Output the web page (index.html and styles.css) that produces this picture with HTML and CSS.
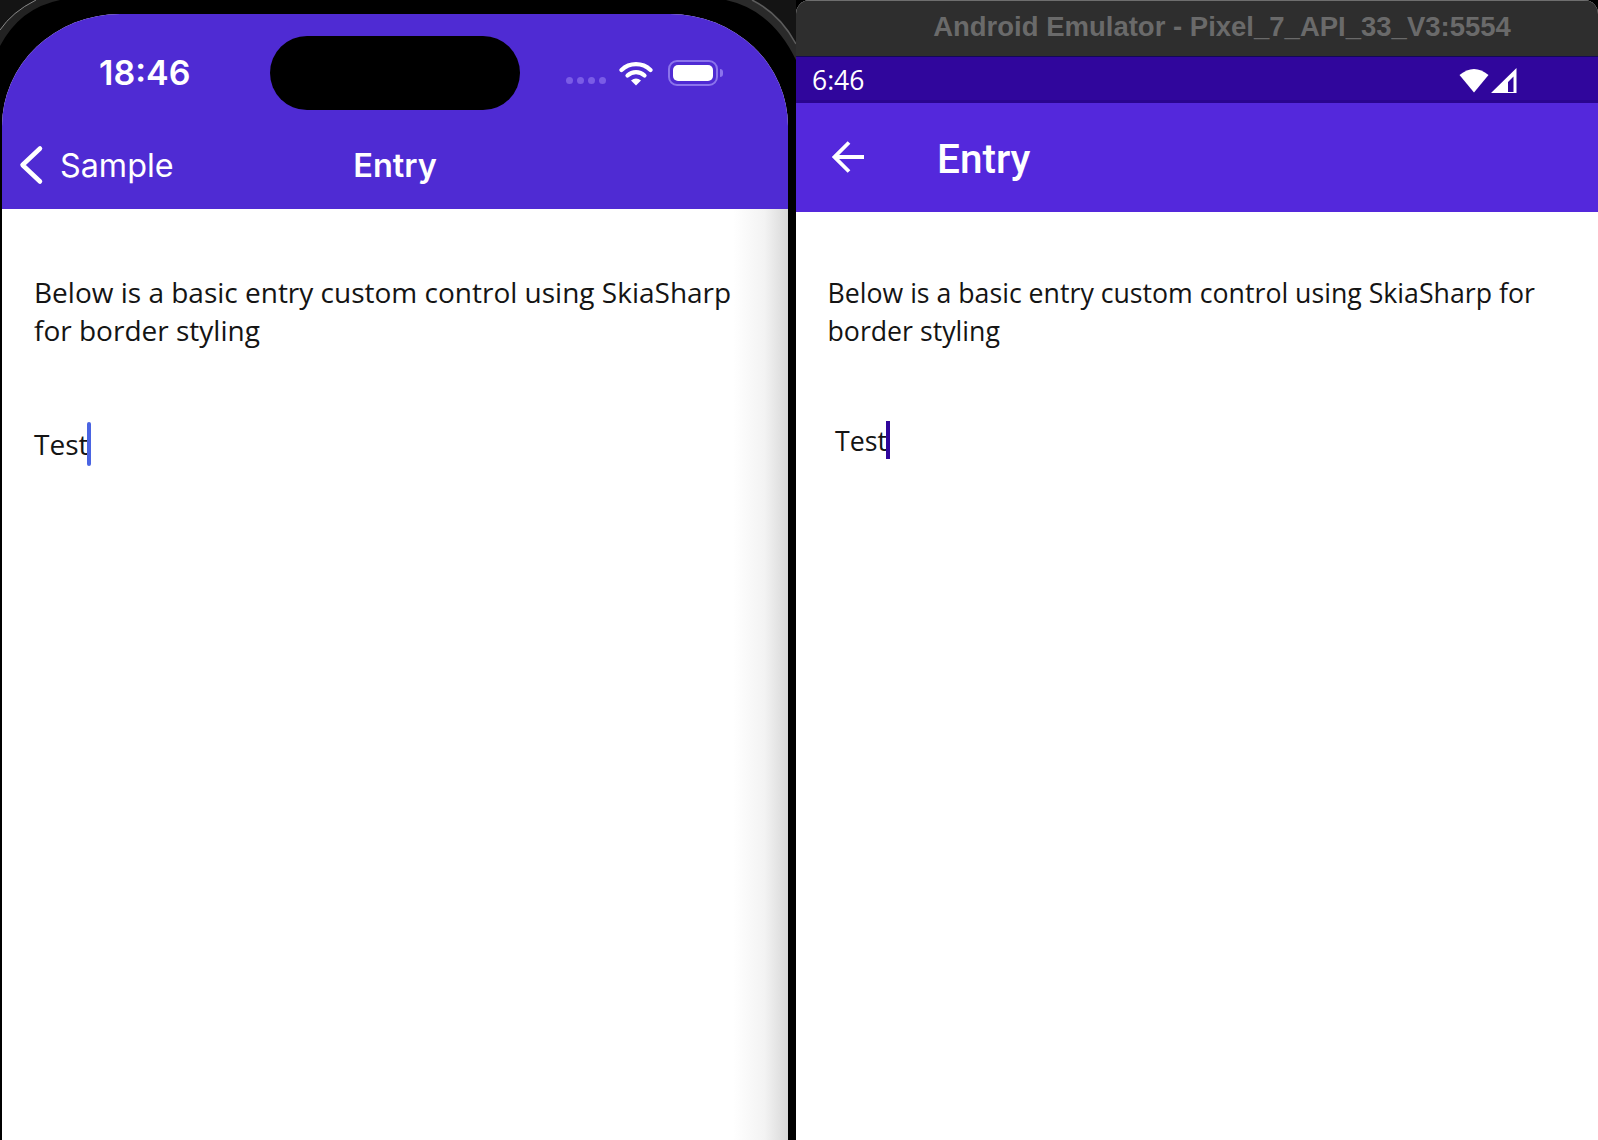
FILE: index.html
```html
<!DOCTYPE html>
<html lang="en">
<head>
  <meta charset="UTF-8">
  <meta name="viewport" content="width=device-width, initial-scale=1.0">
  <title>Entry samples</title>
  <link rel="stylesheet" href="styles.css">
</head>
<body>
  <div class="stage">

    <!-- iOS simulator -->
    <div class="phone">
      <svg class="bezel" width="796" height="60" viewBox="0 0 796 60">
        <path d="M0 0H36Q12 12 0 30Z" fill="#141414"/>
        <path d="M0 30Q12 12 36 0H60Q20 8 0 46Z" fill="#222"/>
        <path d="M0 30Q12 12 36 0" fill="none" stroke="#8a8a8a" stroke-width="1"/>
        <path d="M796 0H752Q780 14 796 44Z" fill="#141414"/>
        <path d="M796 44Q780 14 752 0H726Q772 10 796 60Z" fill="#2a2a2a"/>
        <path d="M796 44Q780 14 752 0" fill="none" stroke="#5c5c5c" stroke-width="1.5"/>
      </svg>
      <div class="screen">
        <header class="ios-header">
          <div class="ios-status">
            <span class="ios-time">18:46</span>
            <div class="ios-icons">
              <div class="dots"><i></i><i></i><i></i><i></i></div>
              <svg class="ios-wifi" width="34" height="26" viewBox="0 0 34 26">
                <path d="M2.500 10A21 21 0 0 1 31.500 10" fill="none" stroke="#fff" stroke-width="4.200" stroke-linecap="round"/>
                <path d="M8.500 15.500A12.500 12.500 0 0 1 25.500 15.500" fill="none" stroke="#fff" stroke-width="4.200" stroke-linecap="round"/>
                <path d="M12 20.500Q17 16.500 22 20.500L17 25.500Z" fill="#fff"/>
              </svg>
              <div class="battery"><div class="battery-fill"></div></div>
              <div class="battery-nub"></div>
            </div>
          </div>
          <div class="ios-nav">
            <svg class="ios-back" width="26" height="40" viewBox="0 0 26 40">
              <path d="M22 3.500L4.500 20L22 36.500" fill="none" stroke="#fff" stroke-width="4.500" stroke-linecap="round" stroke-linejoin="round"/>
            </svg>
            <span class="ios-back-label">Sample</span>
            <span class="ios-title">Entry</span>
          </div>
        </header>
        <div class="ios-content">
          <p class="intro">Below is a basic entry custom control using SkiaSharp for border styling</p>
          <div class="entry"><span>Test</span><span class="caret"></span></div>
        </div>
      </div>
      <div class="island"></div>
    </div>

    <!-- Android emulator -->
    <div class="emulator">
      <div class="titlebar">Android Emulator - Pixel_7_API_33_V3:5554</div>
      <div class="android-status">
        <span>6:46</span>
        <div class="android-icons">
          <svg width="30" height="26" viewBox="0 0 30 26">
            <path d="M0.500 8Q15 -4 29.500 8L15 25.500Z" fill="#fff"/>
          </svg>
          <svg width="26" height="25" viewBox="0 0 26 25">
            <path d="M0 25L25.500 0V25ZM17 24H22.500V8.500L17 14Z" fill="#fff" fill-rule="evenodd"/>
          </svg>
        </div>
      </div>
      <header class="android-bar">
        <svg class="android-back" width="34" height="34" viewBox="0 0 34 34">
          <path d="M32 17H3M17 2.500L2.500 17L17 31.500" fill="none" stroke="#fff" stroke-width="3.800"/>
        </svg>
        <span class="android-title">Entry</span>
      </header>
      <div class="android-content">
        <p class="intro">Below is a basic entry custom control using SkiaSharp for border styling</p>
        <div class="entry"><span>Test</span><span class="caret"></span></div>
      </div>
    </div>

  </div>
</body>
</html>
```

FILE: styles.css
```css
/* Two device screens side by side */
html, body {
  margin: 0;
  padding: 0;
  background-color: #000;
}

.stage {
  display: flex;
  width: 1598px;
  height: 1140px;
  overflow: hidden;
  background-color: #000;
}

.intro {
  margin: 0;
  font-family: "Open Sans", sans-serif;
  font-size: 28px;
  line-height: 38px;
  color: #141414;
}

.entry {
  display: flex;
  align-items: center;
  font-family: "Open Sans", sans-serif;
  font-size: 28px;
  color: #141414;
}

/* iOS side */
.phone {
  position: relative;
  flex: 0 0 796px;
  box-sizing: border-box;
  padding: 14px 8px 0 2px;
}

.bezel {
  position: absolute;
  top: 0;
  left: 0;
}

.screen {
  height: 1126px;
  border-radius: 118px 118px 0 0 / 112px 112px 0 0;
  overflow: hidden;
  background: #fff;
}

.island {
  position: absolute;
  top: 36px;
  left: 270px;
  width: 250px;
  height: 74px;
  border-radius: 37px;
  background: #000;
}

.ios-header {
  height: 195px;
  background-color: #4f2bd3;
  color: #fff;
  font-family: Inter, sans-serif;
}

.ios-status {
  display: flex;
  justify-content: space-between;
  height: 115px;
  padding: 0 65px 0 97px;
}

.ios-time {
  margin-top: 38px;
  font-size: 34px;
  line-height: 42px;
  font-weight: 600;
}

.ios-icons {
  display: flex;
  align-items: flex-start;
  padding-top: 46px;
}

.dots {
  display: flex;
  gap: 4px;
  margin: 17px 13px 0 0;
}

.dots i {
  width: 7px;
  height: 7px;
  border-radius: 50%;
  background: #7a5ce6;
}

.ios-wifi {
  margin-right: 15px;
}

.battery {
  box-sizing: border-box;
  width: 50px;
  height: 26px;
  padding: 3px;
  border: 2px solid #8c74ec;
  border-radius: 9px;
}

.battery-fill {
  height: 100%;
  border-radius: 5px;
  background: #fff;
}

.battery-nub {
  width: 3px;
  height: 8px;
  margin: 9px 0 0 2px;
  border-radius: 0 3px 3px 0;
  background: #8c74ec;
}

.ios-nav {
  position: relative;
  display: flex;
  align-items: center;
  height: 72px;
  padding-left: 16px;
}

.ios-back {
  margin-right: 16px;
}

.ios-back-label {
  font-size: 32.300px;
}

.ios-title {
  position: absolute;
  left: 0;
  right: 0;
  text-align: center;
  font-size: 32.500px;
  font-weight: 600;
}

.ios-content {
  box-sizing: border-box;
  height: 931px;
  padding: 64px 40px 0 32px;
  background: linear-gradient(to right, #fff 93%, #f3f3f3 97%, #d8d8d8 100%);
}

.ios-content .entry {
  margin-top: 73px;
}

.ios-content .caret {
  width: 4px;
  height: 44px;
  margin-left: -1px;
  border-radius: 2px;
  background: #4a64e2;
}

/* Android side */
.emulator {
  flex: 1;
  border-radius: 14px 14px 0 0;
  overflow: hidden;
  background: #fff;
}

.titlebar {
  box-sizing: border-box;
  height: 57px;
  padding-left: 50px;
  border-top: 1px solid #6e6e6e;
  border-bottom: 1px solid #14085a;
  background: #2e2e2e;
  color: #6a6a6a;
  font-family: "Liberation Sans", sans-serif;
  font-size: 27.500px;
  font-weight: 700;
  line-height: 51px;
  text-align: center;
}

.android-status {
  display: flex;
  align-items: center;
  justify-content: space-between;
  box-sizing: border-box;
  height: 46px;
  padding: 2px 81px 0 16px;
  border-bottom: 3px solid #2a0590;
  background: #30069c;
  color: #fff;
  font-family: "Open Sans", sans-serif;
  font-size: 26.500px;
}

.android-icons {
  display: flex;
  align-items: flex-end;
  gap: 2px;
}

.android-bar {
  display: flex;
  align-items: center;
  height: 109px;
  background: #5428dc;
  color: #fff;
}

.android-back {
  margin: 0 71px 0 36px;
  transform: translateY(-1px);
}

.android-title {
  padding-top: 2px;
  font-family: Roboto, sans-serif;
  font-size: 40.500px;
  font-weight: 500;
}

.android-content {
  padding: 62px 16px 0 31.500px;
}

.android-content .intro {
  font-size: 26.700px;
}

.android-content .entry {
  margin: 71px 0 0 7.500px;
  font-size: 26.700px;
}

.android-content .caret {
  width: 4px;
  height: 38px;
  margin-left: -1px;
  background: #30069c;
}
```
